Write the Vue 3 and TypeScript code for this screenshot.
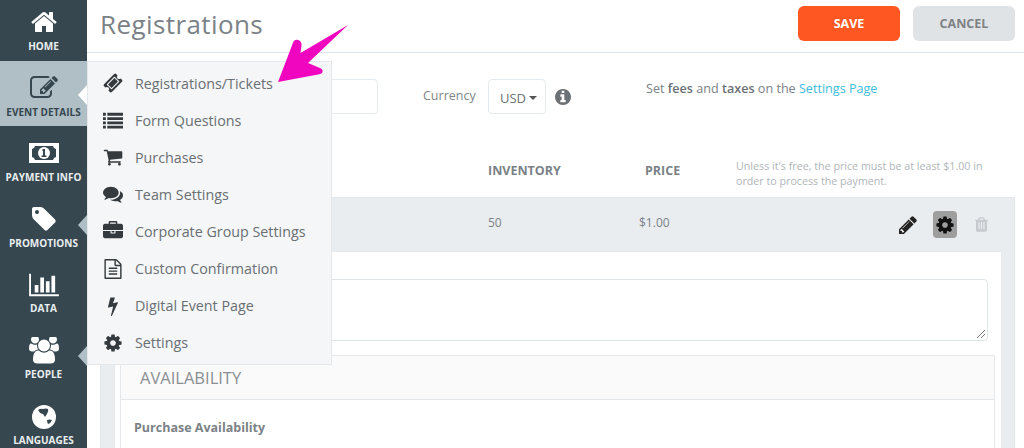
<script setup lang="ts">
interface MenuEntry { label: string; d: string }
const P = {
  ticket: 'M1024 452l316 316-572 572-316-316zm-211 979l618-618q19-19 19-45t-19-45l-362-362q-18-18-45-18t-45 18l-618 618q-19 19-19 45t19 45l362 362q18 18 45 18t45-18zm889-637l-907 908q-37 37-90.500 37t-90.500-37l-126-126q56-56 56-136t-56-136-136-56-136 56l-125-126q-37-37-37-90.500t37-90.500l907-906q37-37 90.500-37t90.500 37l125 125q-56 56-56 136t56 136 136 56 136-56l126 125q37 37 37 90.500t-37 90.500z',
  list: 'M0 256h256v256h-256zM384 256h1408v256h-1408zM0 640h256v256h-256zM384 640h1408v256h-1408zM0 1024h256v256h-256zM384 1024h1408v256h-1408zM0 1408h256v256h-256zM384 1408h1408v256h-1408z',
  cart: 'M704 1536q0 52-38 90t-90 38-90-38-38-90 38-90 90-38 90 38 38 90zm896 0q0 52-38 90t-90 38-90-38-38-90 38-90 90-38 90 38 38 90zm128-1088v512q0 24-16.500 42.500t-40.500 21.500l-1044 122q13 60 13 70 0 16-24 64h920q26 0 45 19t19 45-19 45-45 19h-1024q-26 0-45-19t-19-45q0-11 8-31.500t16-36 21.500-40 15.500-29.500l-177-823h-204q-26 0-45-19t-19-45 19-45 45-19h256q16 0 28.500 6.500t19.500 15.500 13 24.500 8 26 5.500 29.500 4.500 26h1201q26 0 45 19t19 45z',
  comments: 'M1408 768q0 139-94 257t-256.500 186.500-353.500 68.500q-86 0-176-16-124 88-278 128-36 9-86 16h-3q-11 0-20.500-8t-11.500-21q-1-3-1-6.500t.5-6.500 2-6l2.500-5 3.500-5.500 4-5 4.500-5 4-4.500q5-6 23-25t26-29.500 22.500-29 25-38.500 20.500-44q-124-72-195-177t-71-224q0-139 94-257t256.500-186.500 353.500-68.500 353.500 68.500 256.500 186.500 94 257zm384 256q0 120-71 224.500t-195 176.500q10 24 20.500 44t25 38.500 22.500 29 26 29.500 23 25q1 1 4 4.500t4.500 5 4 5 3.500 5.500l2.500 5 2 6 .5 6.500-1 6.500q-3 14-13 22t-22 7q-50-7-86-16-154-40-278-128-90 16-176 16-271 0-472-132 58 4 88 4 161 0 309-45t264-129q125-92 192-212t67-254q0-77-23-152 129 71 204 178t75 230z',
  briefcase: 'M640 256h512v-128h-512v128zm1152 640v480q0 66-47 113t-113 47h-1472q-66 0-113-47t-47-113v-480h672v160q0 26 19 45t45 19h320q26 0 45-19t19-45v-160h672zm-768 0v128h-256v-128h256zm768-480v384h-1792v-384q0-66 47-113t113-47h352v-160q0-40 28-68t68-28h576q40 0 68 28t28 68v160h352q66 0 113 47t47 113z',
  file: 'M1596 380q28 28 48 76t20 88v1152q0 40-28 68t-68 28h-1344q-40 0-68-28t-28-68v-1600q0-40 28-68t68-28h896q40 0 88 20t76 48zm-444-244v376h376q-10-29-22-41l-313-313q-12-12-41-22zm384 1528v-1024h-416q-40 0-68-28t-28-68v-416h-768v1536h1280zm-1024-864q0-14 9-23t23-9h704q14 0 23 9t9 23v64q0 14-9 23t-23 9h-704q-14 0-23-9t-9-23v-64zm736 224q14 0 23 9t9 23v64q0 14-9 23t-23 9h-704q-14 0-23-9t-9-23v-64q0-14 9-23t23-9h704zm0 256q14 0 23 9t9 23v64q0 14-9 23t-23 9h-704q-14 0-23-9t-9-23v-64q0-14 9-23t23-9h704z',
  bolt: 'M1333 566q18 20 7 44l-540 1157q-13 25-42 25-4 0-14-2-17-5-25.500-19t-4.500-30l197-808-406 101q-4 1-12 1-18 0-31-11-18-15-13-39l201-825q4-14 16-23t28-9h328q19 0 32 12.500t13 29.500q0 8-5 18l-171 463 396-98q8-2 12-2 19 0 34 15z',
  cog: 'M1152 896q0-106-75-181t-181-75-181 75-75 181 75 181 181 75 181-75 75-181zm512-109v222q0 12-8 23t-20 13l-185 28q-19 54-39 91 35 50 107 138 10 12 10 25t-9 23q-27 37-99 108t-94 71q-12 0-26-9l-138-108q-44 23-91 38-16 136-29 186-7 28-36 28h-222q-14 0-24.500-8.500t-11.500-21.500l-28-184q-49-16-90-37l-141 107q-10 9-25 9-14 0-25-11-126-114-165-168-7-10-7-23 0-12 8-23 15-21 51-66.500t54-70.500q-27-50-41-99l-183-27q-13-2-21-12.500t-8-23.500v-222q0-12 8-23t19-13l186-28q14-46 39-92-40-57-107-138-10-12-10-24 0-10 9-23 26-36 98.500-107.500t94.500-71.500q13 0 26 10l138 107q44-23 91-38 16-136 29-186 7-28 36-28h222q14 0 24.500 8.500t11.500 21.500l28 184q49 16 90 37l142-107q9-9 24-9 13 0 25 10 129 119 165 170 7 8 7 22 0 12-8 23-15 21-51 66.500t-54 70.500q26 50 41 98l183 28q13 2 21 12.500t8 23.500z',
  home: 'M1472 992v480q0 26-19 45t-45 19h-384v-384h-256v384h-384q-26 0-45-19t-19-45v-480q0-1 .5-3t.5-3l575-474 575 474q1 2 1 6zm223-69l-62 74q-8 9-21 11h-3q-13 0-21-7l-692-577-692 577q-12 8-24 7-13-2-21-11l-62-74q-8-10-7-23.500t11-21.500l719-599q32-26 76-26t76 26l244 204v-195q0-14 9-23t23-9h192q14 0 23 9t9 23v408l219 182q10 8 11 21.500t-7 23.500z',
  edit: 'M888 1184l116-116-152-152-116 116v56h96v96h56zm440-720q-16-16-33 1l-350 350q-17 17-1 33t33-1l350-350q17-17 1-33zm80 594v190q0 119-84.500 203.500t-203.500 84.500h-832q-119 0-203.500-84.500t-84.500-203.500v-832q0-119 84.500-203.500t203.500-84.500h832q63 0 117 25 15 7 18 23 3 17-9 29l-49 49q-14 14-32 8-23-6-45-6h-832q-66 0-113 47t-47 113v832q0 66 47 113t113 47h832q66 0 113-47t47-113v-126q0-13 9-22l64-64q15-15 35-7t20 29zm-96-738l288 288-672 672h-288v-288zm444 132l-92 92-288-288 92-92q28-28 68-28t68 28l152 152q28 28 28 68t-28 68z',
  tag: 'M576 448q0-53-37.500-90.500t-90.500-37.500-90.500 37.500-37.500 90.500 37.500 90.500 90.500 37.500 90.500-37.500 37.500-90.500zm1067 576q0 53-37 90l-491 492q-39 37-91 37-53 0-90-37l-715-716q-38-37-64.500-101t-26.500-117v-416q0-52 38-90t90-38h416q53 0 117 26.500t102 64.500l715 714q37 39 37 91z',
  chart: 'M640 896v512h-256v-512h256zm384-512v1024h-256v-1024h256zm1024 1152v128h-2048v-1536h128v1408h1920zm-640-896v768h-256v-768h256zm384-384v1152h-256v-1152h256z',
  users: 'M593 896q-162 5-265 128h-134q-82 0-138-40.500t-56-118.500q0-353 124-353 6 0 43.500 21t97.500 42.500 119 21.500q67 0 133-23-5 37-5 66 0 139 81 256zm1071 637q0 120-73 189.500t-194 69.500h-874q-121 0-194-69.500t-73-189.500q0-53 3.500-103.500t14-109 26.500-108.500 43-97.500 62-81 85.500-53.500 111.500-20q10 0 43 21.500t73 48 107 48 135 21.500 135-21.500 107-48 73-48 43-21.500q61 0 111.500 20t85.500 53.500 62 81 43 97.500 26.500 108.500 14 109 3.500 103.500zm-1024-1277q0 106-75 181t-181 75-181-75-75-181 75-181 181-75 181 75 75 181zm704 384q0 159-112.500 271.500t-271.500 112.500-271.500-112.500-112.500-271.500 112.500-271.500 271.500-112.500 271.500 112.500 112.500 271.500zm576 225q0 78-56 118.500t-138 40.500h-134q-103-123-265-128 81-117 81-256 0-29-5-66 66 23 133 23 59 0 119-21.500t97.500-42.500 43.500-21q124 0 124 353zm-128-609q0 106-75 181t-181 75-181-75-75-181 75-181 181-75 181 75 75 181z',
  pencil: 'M491 1536l91-91-235-235-91 91v107h128v128h107zm523-928q0-22-22-22-10 0-17 7l-542 542q-7 7-7 17 0 22 22 22 10 0 17-7l542-542q7-7 7-17zm-54-192l416 416-832 832h-416v-416zm683 96q0 53-37 90l-166 166-416-416 166-165q36-38 90-38 53 0 91 38l235 234q37 39 37 91z',
  trash: 'M704 1376v-704q0-14-9-23t-23-9h-64q-14 0-23 9t-9 23v704q0 14 9 23t23 9h64q14 0 23-9t9-23zm256 0v-704q0-14-9-23t-23-9h-64q-14 0-23 9t-9 23v704q0 14 9 23t23 9h64q14 0 23-9t9-23zm256 0v-704q0-14-9-23t-23-9h-64q-14 0-23 9t-9 23v704q0 14 9 23t23 9h64q14 0 23-9t9-23zm-544-992h448l-48-117q-7-9-17-11h-317q-10 2-17 11zm928 32v64q0 14-9 23t-23 9h-96v948q0 83-47 143.500t-113 60.500h-832q-66 0-113-58.500t-47-141.500v-952h-96q-14 0-23-9t-9-23v-64q0-14 9-23t23-9h309l70-167q15-37 54-63t79-26h320q40 0 79 26t54 63l70 167h309q14 0 23 9t9 23z',
  info: 'M1152 1376v-160q0-14-9-23t-23-9h-96v-512q0-14-9-23t-23-9h-320q-14 0-23 9t-9 23v160q0 14 9 23t23 9h96v320h-96q-14 0-23 9t-9 23v160q0 14 9 23t23 9h448q14 0 23-9t9-23zm-128-896v-160q0-14-9-23t-23-9h-192q-14 0-23 9t-9 23v160q0 14 9 23t23 9h192q14 0 23-9t9-23zm640 416q0 209-103 385.500t-279.500 279.500-385.500 103-385.500-103-279.500-279.500-103-385.500 103-385.500 279.500-279.500 385.500-103 385.500 103 279.500 279.500 103 385.500z',
}
const menu: MenuEntry[] = [
  { label: 'Registrations/Tickets', d: P.ticket },
  { label: 'Form Questions', d: P.list },
  { label: 'Purchases', d: P.cart },
  { label: 'Team Settings', d: P.comments },
  { label: 'Corporate Group Settings', d: P.briefcase },
  { label: 'Custom Confirmation', d: P.file },
  { label: 'Digital Event Page', d: P.bolt },
  { label: 'Settings', d: P.cog },
]
</script>

<template>
  <div class="page">
    <aside class="side">
      <div class="nav">
        <div class="nav-item">
          <svg class="ni" width="28" height="28" viewBox="0 0 1792 1792"><path :d="P.home" /></svg>
          <span>Home</span>
        </div>
        <div class="nav-item active">
          <svg class="ni" width="28" height="28" viewBox="0 0 1792 1792"><path :d="P.edit" /></svg>
          <span>Event Details</span>
          <i class="notch white"></i>
        </div>
        <div class="nav-item">
          <svg class="ni money" width="30" height="20" viewBox="0 0 30 20">
            <rect width="30" height="20" fill="#fff" />
            <path d="M6 3h18q.5 2.500 3 3v8q-2.500.5-3 3H6q-.5-2.500-3-3V6q2.500-.5 3-3z" fill="#36474f" />
            <circle cx="15" cy="10" r="6" fill="#fff" />
            <path d="M13.500 6h2.500v6.500h1.500V14h-5v-1.500H14V8h-.5z" fill="#36474f" />
          </svg>
          <span>Payment Info</span>
        </div>
        <div class="nav-item">
          <svg class="ni" width="28" height="28" viewBox="0 0 1792 1792"><path :d="P.tag" /></svg>
          <span>Promotions</span>
          <i class="notch blue low"></i>
        </div>
        <div class="nav-item">
          <svg class="ni" width="30" height="26" viewBox="0 0 2048 1792"><path :d="P.chart" /></svg>
          <span>Data</span>
        </div>
        <div class="nav-item">
          <svg class="ni" width="30" height="27" viewBox="0 128 1920 1664"><path :d="P.users" /></svg>
          <span>People</span>
          <i class="notch blue"></i>
        </div>
        <div class="nav-item">
          <svg class="ni globe" width="24" height="24" viewBox="0 0 24 24">
            <circle cx="12" cy="12" r="12" fill="#fff" />
            <path d="M6 5q3-2 5-1 3-1 5 0 1 2-1 5l-2 3-2-3-3-1q-1-2-2-3zM15 15q3-1 5 0-1 3-4 4-1-2-1-4z" fill="#36474f" />
          </svg>
          <span>Languages</span>
        </div>
      </div>
    </aside>

    <main class="main">
      <header class="top">
        <h1>Registrations</h1>
        <div class="actions">
          <button class="btn save">SAVE</button>
          <button class="btn cancel">CANCEL</button>
        </div>
      </header>

      <section class="content">
        <div class="settings">
          <div class="name-input"></div>
          <span class="cur-label">Currency</span>
          <div class="select">USD<i class="caret"></i></div>
          <svg class="info" width="16" height="16" viewBox="128 128 1536 1536"><path :d="P.info" /></svg>
          <p class="fees">Set <b>fees</b> and <b>taxes</b> on the <a>Settings Page</a></p>
        </div>

        <div class="thead">
          <span></span>
          <b>INVENTORY</b>
          <b>PRICE</b>
          <small>Unless it's free, the price must be at least $1.00 in order to process the payment.</small>
        </div>

        <div class="panel">
          <div class="row">
            <span class="inv">50</span>
            <span class="price">$1.00</span>
            <div class="tools">
              <svg class="pen" width="18" height="18" viewBox="128 128 1536 1536"><path :d="P.pencil" /></svg>
              <span class="gear"><svg width="20" height="20" viewBox="0 0 1792 1792"><path :d="P.cog" /></svg></span>
              <svg class="bin" width="17" height="17" viewBox="0 0 1792 1792"><path :d="P.trash" /></svg>
            </div>
          </div>
          <div class="inner">
            <div class="textarea">
              <svg class="grip" width="9" height="9" viewBox="0 0 9 9"><path d="M1 9L9 1M5 9l4-4" stroke="#777" fill="none" /></svg>
            </div>
            <div class="avail">
              <div class="avail-head">AVAILABILITY</div>
              <div class="avail-body"><b>Purchase Availability</b></div>
            </div>
          </div>
        </div>
      </section>
    </main>

    <div class="menu">
      <div v-for="m in menu" :key="m.label" class="menu-row">
        <span class="mi"><svg width="20" height="20" viewBox="0 0 1792 1792"><path :d="m.d" /></svg></span>
        <span>{{ m.label }}</span>
      </div>
    </div>

    <svg class="arrow" width="80" height="70" viewBox="0 0 80 70">
      <path d="M1 60L15.500 22Q17 17 21 18Q25 19 24.500 24L23.500 31L71 3L31 41L43 46Q47 48 45 51Q43.500 52 41 52.500Z" fill="#f006bf" />
    </svg>
  </div>
</template>

<style>
html, body { margin: 0; background: #fff; overflow: hidden; }
</style>

<style scoped>
.page {
  position: relative;
  display: flex;
  width: 1024px;
  height: 448px;
  overflow: hidden;
  font-family: "Open Sans", sans-serif;
  color: #6b7175;
}
.side { width: 87px; flex: none; background: #36474f; overflow: hidden; }
.nav { margin-top: -5px; }
.nav-item {
  position: relative;
  height: 65.600px;
  display: flex;
  flex-direction: column;
  align-items: center;
  justify-content: flex-end;
  padding-bottom: 7.500px;
  box-sizing: border-box;
  color: #e9eef0;
  font-size: 10px;
  font-weight: 700;
  text-transform: uppercase;
  white-space: nowrap;
}
.nav-item span { line-height: 14px; margin-top: 3px; }
.ni { fill: #fff; display: block; }
.ni.money { margin-bottom: 4px; }
.ni.globe { margin-bottom: 1px; }
.nav-item.active { background: #b0bec5; color: #36474f; }
.nav-item.active .ni { fill: #36474f; }
.notch {
  position: absolute;
  right: 0;
  width: 0;
  height: 0;
  border-style: solid;
  border-width: 10px 9px 10px 0;
  border-color: transparent;
}
.notch.white { border-right-color: #fff; top: 24px; }
.notch.blue { border-right-color: #b0bec5; top: 23px; }
.notch.low { top: 23px; }

.main { flex: 1; min-width: 0; }
.top {
  height: 52px;
  border-bottom: 1px solid #dfe6ea;
  display: flex;
  align-items: center;
  justify-content: space-between;
  padding: 0 9px 0 13px;
}
h1 { margin: -4px 0 0; font-size: 26px; font-weight: 400; color: #7b8287; letter-spacing: 0.4px; }
.actions { display: flex; gap: 13px; margin-top: -5px; }
.btn {
  width: 102px;
  height: 35px;
  border: 0;
  border-radius: 6px;
  font: 700 12.500px "Open Sans", sans-serif;
  padding: 0;
}
.save { background: #ff5722; color: #fff; }
.cancel { background: #e0e3e6; color: #7d8285; }

.content { padding: 26px 9px 0 13px; }
.settings { display: flex; align-items: flex-start; height: 78px; font-size: 12.500px; }
.name-input { width: 276px; height: 33px; border: 1px solid #e4eaee; border-radius: 4px; flex: none; }
.cur-label { margin-left: 45px; margin-top: 8px; width: 53px; white-space: nowrap; color: #80868a; }
.select {
  margin-left: 12px;
  width: 58px;
  height: 35px;
  box-sizing: border-box;
  border: 1px solid #e4eaee;
  border-radius: 4px;
  padding: 2px 0 0 3px;
  display: flex;
  align-items: center;
  justify-content: center;
  gap: 3px;
  color: #6b7175;
  font-size: 13px;
}
.caret { border: 4px solid transparent; border-top-color: #555; border-bottom: 0; }
.info { margin: 10px 0 0 9px; fill: #6b7175; }
.fees { margin: 1px 0 0 75px; color: #7b8287; font-size: 12.600px; line-height: 18px; }
.fees b { font-weight: 600; color: #6b7175; }
.fees a { color: #40bcdc; }

.thead {
  display: grid;
  grid-template-columns: 388px 157px 91px 1fr;
  height: 40px;
  font-size: 12.500px;
  align-items: start;
}
.thead b { font-weight: 700; color: #7b8287; margin-top: 5px; }
.thead small { display: block; font-size: 10.700px; line-height: 15px; color: #b1b6ba; width: 262px; margin-top: 2px; }

.panel {
  background: #e9edf0;
  border: 1px solid #e2e7ea;
  padding: 0 12px 0 13px;
  height: 300px;
  box-sizing: border-box;
  width: 915px;
}
.row {
  height: 53px;
  display: grid;
  grid-template-columns: 374px 151px 1fr auto;
  align-items: center;
  font-size: 12px;
  color: #7b8287;
}
.inv { grid-column: 2; margin-top: -5px; }
.price { grid-column: 3; margin-top: -5px; }
.tools { grid-column: 4; display: flex; align-items: center; gap: 16px; padding-right: 12px; }
.pen { fill: #222; }
.gear { width: 24px; height: 27px; background: #9e9e9e; border-radius: 4px; display: flex; align-items: center; justify-content: center; }
.gear svg { fill: #111; }
.bin { fill: #c6cacd; }
.inner { background: #fff; height: 260px; padding: 27px 13px 0 5px; box-sizing: border-box; border: 1px solid #e6eaed; }
.textarea { position: relative; height: 62px; margin-left: 14px; box-sizing: border-box; border: 1px solid #dfe4e7; border-radius: 4px; }
.grip { position: absolute; right: 2px; bottom: 2px; }
.avail { margin-top: 14px; width: 875px; border: 1px solid #e4e8ea; box-sizing: border-box; height: 100px; }
.avail-head { height: 44px; background: #fafafa; border-bottom: 1px solid #e4e8ea; padding: 11px 0 0 19px; box-sizing: border-box; font-size: 16.500px; color: #8a8f93; line-height: 22px; }
.avail-body { padding: 19px 0 0 13px; font-size: 12.500px; }
.avail-body b { font-weight: 700; color: #7b8287; }

.menu {
  position: absolute;
  left: 87px;
  top: 61px;
  width: 245px;
  height: 304px;
  box-sizing: border-box;
  background: #f5f6f8;
  border: 1px solid #e4e8ea;
  padding-top: 2.500px;
  display: flex;
  flex-direction: column;
  font-size: 14.300px;
  color: #696f73;
}
.menu-row { height: 37.100px; flex: none; display: flex; align-items: center; padding-left: 15px; }
.mi { width: 32px; flex: none; display: flex; }
.mi svg { fill: #343a3d; display: block; }
.arrow { position: absolute; left: 277px; top: 22px; }
</style>
